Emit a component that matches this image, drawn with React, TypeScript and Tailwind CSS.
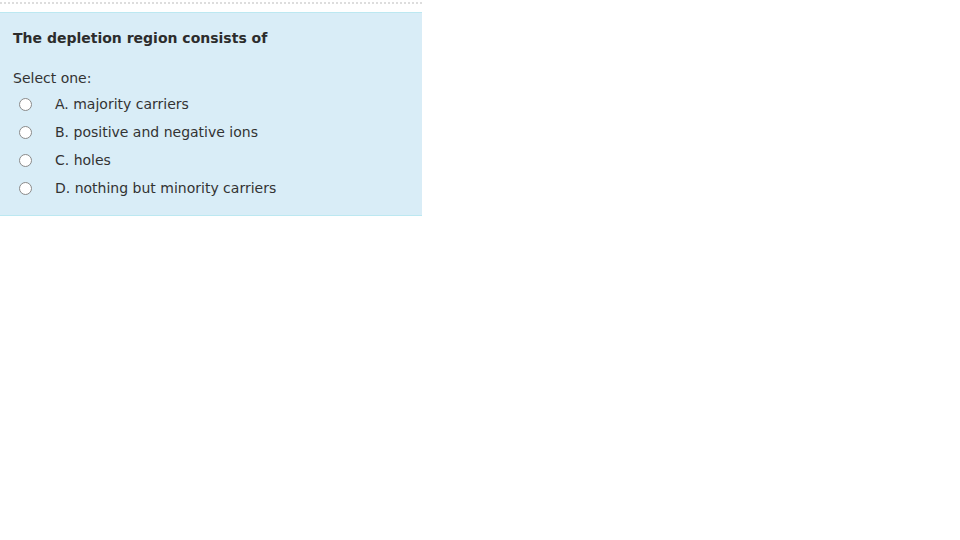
export default function App() {
  const opts = [
    "A. majority carriers",
    "B. positive and negative ions",
    "C. holes",
    "D. nothing but minority carriers",
  ];
  return (
    <div className="w-[960px] h-[540px] bg-white" style={{ fontFamily: '"DejaVu Sans", Verdana, sans-serif' }}>
      <div className="w-[422px] pt-[2px]">
        <div className="border-t-2 border-dotted border-[#dddddd]"></div>
        <div className="mt-[8px] bg-[#d9edf7] border-t border-b border-[#bce8f1] px-[13px] pt-[15px] pb-[13px] text-[#333333]">
          <div className="text-[14px] font-bold leading-[20px] text-[#2c2c2c]">The depletion region consists of</div>
          <div className="mt-[21px] text-[14px] leading-[18px]">Select one:</div>
          <div className="mt-[3px] flex flex-col">
            {opts.map((o) => (
              <label key={o} className="flex items-center h-[28px]">
                <span className="ml-[6px] w-[13px] h-[13px] rounded-full border border-[#8a8a8a] bg-white"></span>
                <span className="ml-[23px] text-[14px]">{o}</span>
              </label>
            ))}
          </div>
        </div>
      </div>
    </div>
  );
}
